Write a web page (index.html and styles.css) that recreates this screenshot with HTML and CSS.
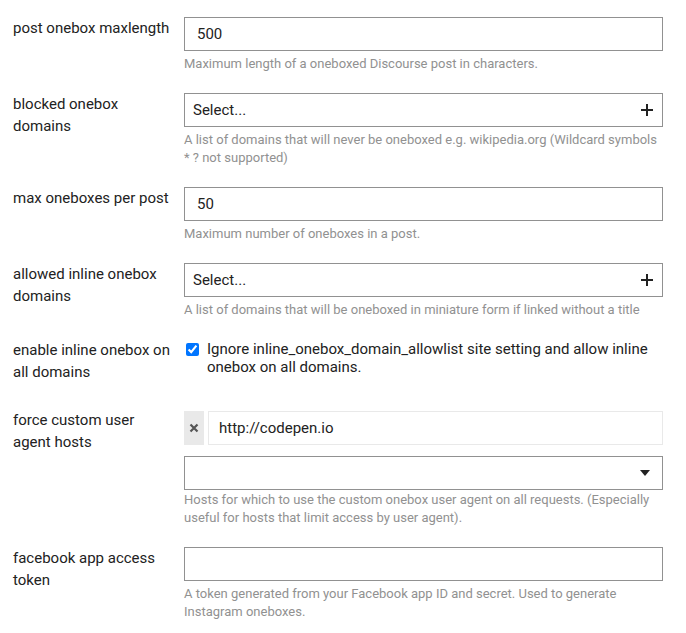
FILE: index.html
```html
<!DOCTYPE html>
<html lang="en">
<head>
  <meta charset="UTF-8" />
  <title>Onebox settings</title>
  <link rel="stylesheet" href="styles.css">
</head>
<body>
  <div class="settings">

    <div class="row">
      <div class="label">post onebox maxlength</div>
      <div class="value">
        <div class="input">500</div>
        <div class="desc">Maximum length of a oneboxed Discourse post in characters.</div>
      </div>
    </div>

    <div class="row">
      <div class="label">blocked onebox domains</div>
      <div class="value">
        <div class="input select">
          <span>Select...</span>
          <svg class="plus" width="12" height="12" viewBox="0 0 12 12"><path d="M5 0h2v5h5v2H7v5H5V7H0V5h5z" fill="#222"/></svg>
        </div>
        <div class="desc">A list of domains that will never be oneboxed e.g. wikipedia.org (Wildcard symbols * ? not supported)</div>
      </div>
    </div>

    <div class="row">
      <div class="label">max oneboxes per post</div>
      <div class="value">
        <div class="input">50</div>
        <div class="desc">Maximum number of oneboxes in a post.</div>
      </div>
    </div>

    <div class="row">
      <div class="label">allowed inline onebox domains</div>
      <div class="value">
        <div class="input select">
          <span>Select...</span>
          <svg class="plus" width="12" height="12" viewBox="0 0 12 12"><path d="M5 0h2v5h5v2H7v5H5V7H0V5h5z" fill="#222"/></svg>
        </div>
        <div class="desc">A list of domains that will be oneboxed in miniature form if linked without a title</div>
      </div>
    </div>

    <div class="row row-check">
      <div class="label">enable inline onebox on all domains</div>
      <div class="value">
        <label class="check">
          <input type="checkbox" checked>
          <span>Ignore inline_onebox_domain_allowlist site setting and allow inline onebox on all domains.</span>
        </label>
      </div>
    </div>

    <div class="row row-list">
      <div class="label">force custom user agent hosts</div>
      <div class="value">
        <div class="list-item">
          <div class="remove">
            <svg width="10" height="10" viewBox="0 0 10 10"><path d="M1.5 1.5l7 7M8.5 1.5l-7 7" stroke="#555" stroke-width="2.2"/></svg>
          </div>
          <div class="item-value">http://codepen.io</div>
        </div>
        <div class="input select combo">
          <span></span>
          <svg width="10" height="6" viewBox="0 0 10 6"><path d="M0 0h10L5 6z" fill="#222"/></svg>
        </div>
        <div class="desc">Hosts for which to use the custom onebox user agent on all requests. (Especially useful for hosts that limit access by user agent).</div>
      </div>
    </div>

    <div class="row">
      <div class="label">facebook app access token</div>
      <div class="value">
        <div class="input"></div>
        <div class="desc">A token generated from your Facebook app ID and secret. Used to generate Instagram oneboxes.</div>
      </div>
    </div>

  </div>
</body>
</html>
```

FILE: styles.css
```css
body {
  font-family: Roboto, 'Liberation Sans', sans-serif;
  background: #fff;
  color: #222;
  margin: 0;
  padding: 0;
}

.settings {
  padding: 17px 23px 0 13px;
}

.row {
  display: flex;
  margin-bottom: 20px;
}

.label {
  width: 160px;
  margin-right: 11px;
  font-size: 15px;
  line-height: 22px;
}

.value {
  flex: 1;
}

.input {
  box-sizing: border-box;
  height: 34px;
  border: 1px solid #919191;
  padding: 0 12px;
  font-size: 15px;
  line-height: 32px;
}

.select {
  display: flex;
  justify-content: space-between;
  align-items: center;
  padding: 0 9px 0 8px;
}

.combo {
  margin-top: 11px;
  padding-right: 12px;
}

.plus {
  display: block;
}

.desc {
  font-size: 13px;
  line-height: 18px;
  color: #919191;
  margin-top: 4px;
}

.row-check {
  margin-bottom: 28px;
}

.check {
  display: flex;
  align-items: flex-start;
  font-size: 15px;
  line-height: 18px;
  padding-top: 1px;
}

.check input {
  width: 13px;
  height: 13px;
  margin: 3px 8px 0 2px;
  flex: none;
}

/* list setting: removable value row, then the chooser */
.row-list .label {
  margin-top: -2px;
}

.row-list .desc {
  margin-top: 1px;
}

.list-item {
  display: flex;
  gap: 4px;
  height: 34px;
}

.remove {
  width: 20px;
  background: #e9e9e9;
  display: flex;
  align-items: center;
  justify-content: center;
}

.item-value {
  flex: 1;
  box-sizing: border-box;
  border: 1px solid #e9e9e9;
  padding: 0 10px;
  font-size: 15px;
  line-height: 32px;
}
```
